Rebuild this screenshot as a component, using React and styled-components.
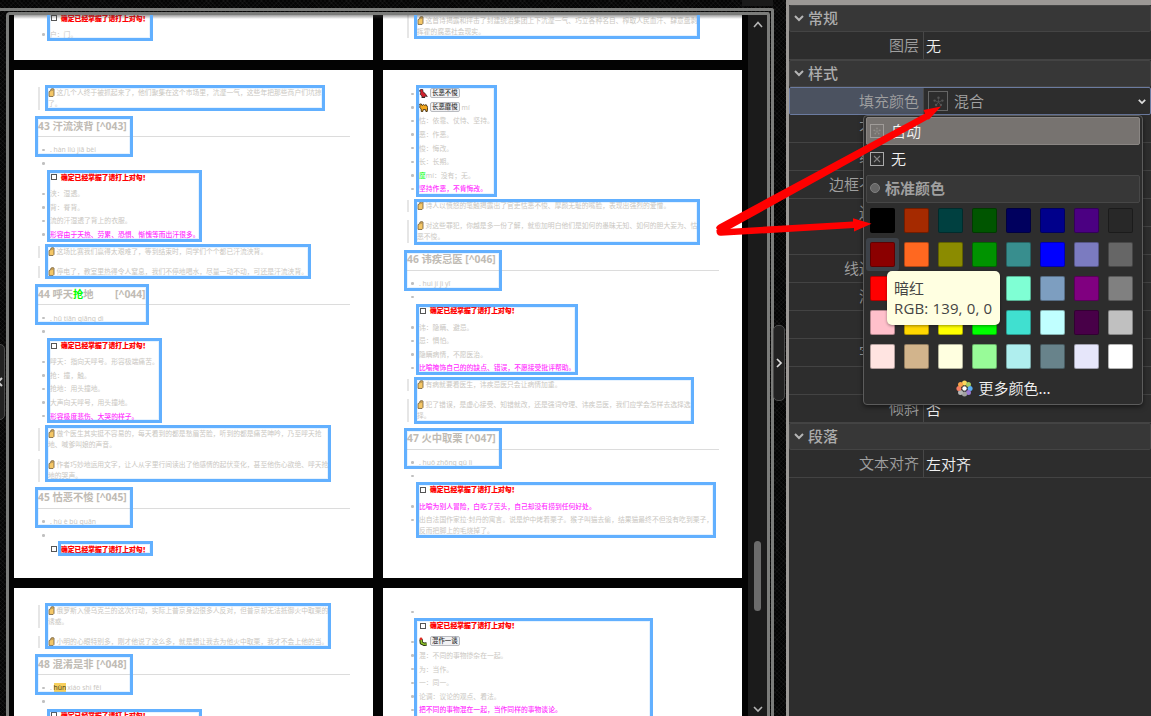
import React from "react";
import styled, { createGlobalStyle, css } from "styled-components";

const Global = createGlobalStyle`
  * { box-sizing: border-box; }
  html, body { margin: 0; background: #050505; overflow: hidden; }
  body { font-family: "Noto Sans", "Noto Sans CJK SC", sans-serif; }
`;

const weave = css`
  background-color: #050505;
  background-image:
    repeating-linear-gradient(45deg, rgba(255,255,255,0.035) 0 1px, transparent 1px 3px),
    repeating-linear-gradient(-45deg, rgba(255,255,255,0.03) 0 1px, transparent 1px 3px);
`;

const Shell = styled.div`
  position: relative;
  display: flex;
  width: 1151px;
  height: 716px;
  overflow: hidden;
  ${weave}
`;

/* ---------- document area ---------- */

const Workspace = styled.div`
  width: 774px;
  height: 716px;
  padding-top: 8px;
  flex: none;
`;

const OuterFrame = styled.div`
  height: 708px;
  border-top: 3px solid #7b7c7a;
  border-right: 3px solid #7b7c7a;
  border-top-right-radius: 3px;
  padding: 1px 1px 0 6px;
`;

const InnerFrame = styled.div`
  display: flex;
  height: 704px;
  border: 3px solid #7b7c7a;
  border-bottom: 0;
  border-radius: 4px 3px 0 0;
  background: #030303;
`;

const Pages = styled.div`
  position: relative;
  display: grid;
  grid-template-columns: 359px 359px;
  grid-template-rows: 45px 508px 128px;
  gap: 10px;
  width: 739px;
  padding-left: 5px;
  height: 701px;
  overflow: hidden;
  &::after {
    content: "";
    position: absolute;
    inset: 0 6px auto 5px;
    height: 4px;
    background: linear-gradient(rgba(60,60,60,0.5), transparent);
  }
`;

const Page = styled.article`
  background: #fff;
  overflow: hidden;
  padding: ${(p) => p.$top}px 23px 0 24px;
  color: #cac7c2;
  font-size: 6.8px;
  line-height: 11px;
  white-space: nowrap;
`;

const Quote = styled.blockquote`
  margin: 0 0 8px;
  padding: 0 0 1px 8px;
  border-left: 2px solid #e6e6e6;
`;

const Heading = styled.h2`
  margin: -8px 0 6px;
  height: 27.2px;
  padding-top: 8.7px;
  border-bottom: 1px solid #dcdcdc;
  color: #bfbbb4;
  font-size: 10.3px;
  line-height: 14px;
  font-weight: 700;
  white-space: pre;
`;

const Items = styled.ul`
  margin: 0 0 4.7px;
  padding: 0;
  list-style: none;
`;

const Item = styled.li`
  display: flex;
  min-height: 13.6px;
  padding: 1.3px 0 0 12px;
  position: relative;
  color: ${(p) => (p.$hot ? "#ff30ff" : "inherit")};
  font-weight: ${(p) => (p.$hot ? 500 : 400)};
  &::before {
    content: "";
    position: absolute;
    left: 4px;
    top: 5.6px;
    width: 2.5px;
    height: 2.5px;
    border-radius: 50%;
    background: #c0c0c0;
  }
`;

const Check = styled.div`
  display: flex;
  align-items: center;
  gap: 4px;
  height: 16.6px;
  padding: 0 0 2.4px 13px;
  color: #ff0000;
  font-weight: 800;
  -webkit-text-stroke: 0.15px #ff0000;
`;

const Box = styled.i`
  width: 6px;
  height: 6px;
  border: 1px solid #555;
`;

const Mark = styled.span`
  color: #0f0;
`;

const Amber = styled.span`
  background: #f8d05c;
  color: #4a4020;
  height: 10px;
  line-height: 10px;
  margin: 0 1px 0 0;
`;

const Tag = styled.span`
  display: inline-block;
  height: 10px;
  margin: 0 2px 0 2px;
  padding: 0 1px;
  border: 1px solid #b9bbc0;
  border-radius: 2px;
  background: #f1f1f3;
  color: #333;
  font-size: 6.4px;
  line-height: 8px;
  font-weight: 500;
`;

const TagLine = styled.span`
  display: flex;
  align-items: center;
`;

const HandSvg = styled.svg`
  width: 7px;
  height: 9px;
  margin: 0 1.5px 0 0;
  vertical-align: -2px;
`;

const Hand = () => (
  <HandSvg viewBox="0 0 7 9">
    <path d="M1 8.4V3.6L2.6 2.8 3.1 1 4.4.5 6 1v6.4L5 8.5Z" fill="#f5c766" stroke="#6e5a3c" strokeWidth=".8" />
    <path d="M3.2 3.2V1.2M4.6 3V1" stroke="#8a6f40" strokeWidth=".5" />
  </HandSvg>
);

const AnimalSvg = styled.svg`
  width: 9px;
  height: 9px;
  flex: none;
`;

const Parrot = () => (
  <AnimalSvg viewBox="0 0 9 9">
    <path d="M.5 1.5 2 .3 3.8.6 4 3l2 1.3L8.3 7.5 6 7l-.3 1.6H2.8L3 7 1.2 5.4 1.8 3Z" fill="#d2202c" stroke="#2a1717" strokeWidth=".7" />
    <path d="M.4 2.4 1.4 1.7M3 8.4h3" stroke="#222" strokeWidth=".9" />
  </AnimalSvg>
);
const Camel = () => (
  <AnimalSvg viewBox="0 0 9 9">
    <path d="M.3 1.4 2.2.9l.9 1.7L4.4 1.5l1.2.8L7.2 1.7l1.5 2.6L8.2 8.5H6.9L6.6 6.6H4.2L3.8 8.5H2.3L2.1 5.8.7 4.6 1 2.6Z" fill="#f3a71c" stroke="#3d2a0c" strokeWidth=".9" />
  </AnimalSvg>
);
const Worm = () => (
  <AnimalSvg viewBox="0 0 9 9">
    <path d="M2 2.2 2.4 6 5 7.3 7.6 7" fill="none" stroke="#26320e" strokeWidth="3.4" strokeLinejoin="round" />
    <path d="M2.2 3 2.5 5.9 5 7.2 7.6 7" fill="none" stroke="#8fc42c" strokeWidth="1.6" />
    <circle cx="2" cy="1.8" r="1.4" fill="#e02a24" />
  </AnimalSvg>
);

const Todo = () => (
  <Check>
    <Box />
    <span>确定已经掌握了请打上对勾！</span>
  </Check>
);

const Said = ({ lines }) => (
  <Quote>
    {lines.map((text, i) => (
      <div key={text}>
        {i === 0 && <Hand />}
        {text}
      </div>
    ))}
  </Quote>
);

const List = ({ rows, hot }) => (
  <Items>
    {rows.map((row, i) => (
      <Item key={i} $hot={i === hot}>
        <span>{row}</span>
      </Item>
    ))}
  </Items>
);

const Entry = ({ title, pinyin, rows, hot }) => (
  <>
    <Heading>{title}</Heading>
    <Item>
      <span>. {pinyin}</span>
    </Item>
    <Item />
    <Todo />
    {rows && <List rows={rows} hot={hot} />}
  </>
);

const PartialTop = styled.div`
  margin-top: -4px;
`;

const Scroll = styled.div`
  display: flex;
  flex-direction: column;
  align-items: center;
  width: 19px;
  background: #1b1b1b;
`;
const Thumb = styled.div`
  width: 7px;
  height: 70px;
  margin: 510px 0 94px;
  border-radius: 4px;
  background: #6c6c6c;
`;
const Chevron = styled.svg`
  display: block;
  flex: none;
  fill: none;
  stroke: ${(p) => p.$color || "#b5b5b5"};
  stroke-width: ${(p) => p.$weight || 1.6};
`;
const ScrollTop = styled.div`
  height: 16px;
  padding-top: 6px;
`;

/* ---------- selection frames over the pages ---------- */

const Overlay = styled.div`
  position: absolute;
  inset: 0;
  clip-path: inset(15px 384px 0 9px);
`;
const Selection = styled.div`
  position: absolute;
  left: ${(p) => p.$r[0]}px;
  top: ${(p) => p.$r[1]}px;
  width: ${(p) => p.$r[2] - p.$r[0]}px;
  height: ${(p) => p.$r[3] - p.$r[1]}px;
  border: 3px solid #62b0ff;
  box-shadow: inset 0 0 0 1px rgba(92,174,255,0.15);
`;
const frames = [
  [47, 0, 153, 41], [45, 85, 325, 111], [35, 116, 133, 157], [47, 170, 202, 242],
  [45, 244, 311, 279], [35, 284, 149, 325], [47, 338, 162, 423], [45, 425, 331, 482],
  [35, 487, 133, 528], [58, 541, 153, 556], [45, 603, 331, 649], [35, 654, 133, 695],
  [47, 709, 202, 740], [414, 0, 700, 39], [416, 85, 497, 197], [414, 199, 700, 245],
  [404, 250, 502, 291], [416, 304, 578, 375], [414, 377, 694, 424], [404, 428, 502, 469],
  [416, 482, 716, 538], [414, 618, 653, 740],
];

const Handle = styled.div`
  position: absolute;
  display: flex;
  align-items: center;
  justify-content: center;
  left: ${(p) => p.$x}px;
  top: ${(p) => p.$y}px;
  width: 12px;
  height: 76px;
  border: 1px solid #4c4c4c;
  border-radius: 5px;
  background: #222;
`;
const TopTab = styled.div`
  position: absolute;
  left: 742px;
  top: 0;
  width: 31px;
  height: 6px;
  background: #1a1a1a;
`;

/* ---------- inspector ---------- */

const Inspector = styled.aside`
  width: 365px;
  height: 716px;
  margin-left: 12px;
  border-left: 3px solid #9b9895;
  border-top: 5px solid #9b9895;
  background: #2d2d2d;
  color: #a0a0a0;
  font-family: "Noto Sans CJK SC", sans-serif;
  font-weight: 350;
  font-size: 15px;
  line-height: 20px;
`;
const Section = styled.div`
  display: flex;
  align-items: center;
  gap: 4px;
  height: 27px;
  padding: 0 0 2px 4px;
  border: 1px solid #444;
  border-radius: 2px;
  background: #373737;
  color: #acacac;
  font-weight: 500;
`;
const Row = styled.div`
  display: grid;
  grid-template-columns: 135px 1fr;
  height: 28px;
  border-bottom: 1px solid #434343;
  ${(p) => p.$active && css`
    border: 1px solid #6b7ba0;
    border-radius: 2px;
    grid-template-columns: 134px 1fr;
  `}
`;
const Label = styled.div`
  border-right: 1px solid #484848;
  padding: 3px ${(p) => 4 + (p.$covered || 0) * 15}px 0 0;
  text-align: right;
  background: ${(p) => (p.$active ? "#4b5260" : "transparent")};
`;
const Value = styled.div`
  display: flex;
  align-items: center;
  padding: 0 4px 0 ${(p) => (p.$active ? 4 : 2)}px;
  color: ${(p) => (p.$active ? "#a3a3a3" : "#f0f0f0")};
`;
const Grow = styled.span`
  flex: 1;
  padding-left: 6px;
`;
const IconBox = styled.span`
  display: flex;
  align-items: center;
  justify-content: center;
  flex: none;
  width: ${(p) => p.$s}px;
  height: ${(p) => p.$s}px;
  border: 1px solid ${(p) => p.$c};
`;

const Star = ({ size, color }) => (
  <svg width={size} height={size} viewBox="0 0 10 10" fill={color}>
    <circle cx="5" cy="1.6" r="1.1" />
    <circle cx="8.5" cy="4.2" r="1.1" />
    <circle cx="7.2" cy="8.2" r="1.1" />
    <circle cx="2.8" cy="8.2" r="1.1" />
    <circle cx="1.5" cy="4.2" r="1.1" />
    <path d="M5 5.5V3M5 5.500 7.400 4.700M5 5.500 6.500 7.500M5 5.500 3.500 7.500M5 5.500 2.600 4.700" stroke={color} strokeWidth=".7" />
  </svg>
);

const Menu = styled.div`
  position: absolute;
  left: 863px;
  top: 115px;
  width: 280px;
  height: 290px;
  padding: 1px 2px;
  border: 1px solid #5c5c5c;
  border-radius: 4px;
  background: #2d2d2d;
  box-shadow: 0 2px 5px rgba(0,0,0,0.5);
  color: #f2f2f2;
  font-family: "Noto Sans CJK SC", sans-serif;
  font-weight: 350;
  font-size: 15px;
  line-height: 20px;
`;
const MenuItem = styled.div`
  display: flex;
  align-items: center;
  gap: 7px;
  height: 28px;
  padding-left: ${(p) => (p.$on ? 3 : 4)}px;
  border-radius: 2px;
  ${(p) => p.$on && "background: #777370; border: 1px solid #8a8683;"}
`;
const MenuHead = styled.div`
  display: flex;
  align-items: center;
  gap: 5px;
  height: 28px;
  margin-top: 2px;
  padding: 0 0 2px 3px;
  border: 1px solid #474747;
  border-radius: 2px;
  background: #373737;
  color: #a0a0a0;
  font-weight: 600;
`;
const Dot = styled.i`
  width: 10px;
  height: 10px;
  border-radius: 50%;
  background: #666;
  border: 1px solid #808080;
`;
const Palette = styled.div`
  display: grid;
  grid-template-columns: repeat(8, 34px);
  grid-auto-rows: 34px;
  margin-top: 1px;
`;
const Cell = styled.div`
  display: flex;
  align-items: center;
  justify-content: center;
  width: 33px;
  height: 33px;
  border-radius: 3px;
  background: ${(p) => (p.$on ? "#3d4249" : "transparent")};
`;
const Swatch = styled.div`
  width: 25px;
  height: 25px;
  border-radius: 2px;
  border: 1px solid rgba(0,0,0,0.3);
  background: ${(p) => p.$c};
`;
const More = styled.div`
  display: flex;
  align-items: center;
  justify-content: center;
  gap: 5px;
  height: 28px;
  padding-left: 1px;
`;
const Tooltip = styled.div`
  position: absolute;
  left: 887px;
  top: 271px;
  width: 113px;
  height: 54px;
  padding: 7px 7px;
  border-radius: 5px;
  background: #ffffe1;
  color: #444;
  font: 400 15px/20px "Noto Sans CJK SC", sans-serif;
  white-space: nowrap;
  box-shadow: 0 1px 3px rgba(0,0,0,0.4);
`;
const Latin = styled.div`
  font-family: "Open Sans", "Noto Sans", sans-serif;
  letter-spacing: 0.15px;
`;
const Arrows = styled.svg`
  position: absolute;
  left: 0;
  top: 0;
`;

const colors = [
  "#000000", "#a52a00", "#004040", "#005500", "#00005e", "#00008b", "#4b0082", "#282828",
  "#8b0000", "#ff6820", "#8b8b00", "#009300", "#388e8e", "#0000ff", "#7b7bc0", "#666666",
  "#ff0000", "#ffad5b", "#ffd700", "#00c800", "#7fffd4", "#7d9ec0", "#800080", "#808080",
  "#ffc0cb", "#ffd700", "#ffff00", "#00ff00", "#40e0d0", "#c0ffff", "#480048", "#c0c0c0",
  "#ffe4e1", "#d2b48c", "#ffffe0", "#98fb98", "#afeeee", "#68838b", "#e6e6fa", "#ffffff",
];
const petals = ["#f9d65c", "#a5ca62", "#59aef2", "#9b7bd4", "#a0a0a0", "#b5b5b5", "#f37d62", "#f9a24b"];

const Down = ({ color, weight }) => (
  <Chevron width="10" height="8" viewBox="0 0 10 8" $color={color} $weight={weight}>
    <path d="M1 2 5 6 9 2" />
  </Chevron>
);

// Start of each label that the open menu runs over, with the number of characters under the menu.
const coveredRows = [
  ["不", 3], ["线", 3], ["边框不", 3], ["边", 3], ["", 0],
  ["线边", 3], ["渐", 3], ["", 0], ["字", 3], ["", 0],
];

export default function App() {
  return (
    <Shell>
      <Global />
      <Workspace>
        <OuterFrame>
          <InnerFrame>
            <Pages>
              <Page $top={0}>
                <PartialTop>
                  <Todo />
                  <List rows={["户：门。"]} />
                </PartialTop>
              </Page>
              <Page $top={0}>
                <Said lines={["这首诗揭露和抨击了封建统治集团上下沆瀣一气、巧立各种名目、榨取人民血汗、肆意盘剥", "挥霍的腐恶社会现实。"]} />
              </Page>
              <Page $top={17}>
                <Said lines={["这几个人终于被抓起来了，他们聚集在这个市场里，沆瀣一气，这些年把那些商户们坑掠", "了。"]} />
                <Entry title="43 汗流浃背 [^043]" pinyin="hàn liú jiā bèi" hot={3}
                  rows={["浃：湿透。", "背：脊背。", "流的汗湿透了背上的衣服。", "形容由于天热、劳累、恐惧、惭愧等而出汗很多。"]} />
                <Said lines={["这场比赛我们赢得太艰难了，等到结束时，同学们个个都已汗流浃背。"]} />
                <Said lines={["停电了，教室里热得令人窒息，我们不停地喝水，尽量一动不动，可还是汗流浃背。"]} />
                <Entry title={<>44 呼天<Mark>抢</Mark>地{"       "}{" "}[^044]</>} pinyin="hū tiān qiāng dì" hot={4}
                  rows={["呼天：指向天呼号。形容极端痛苦。", "抢：撞，触。", "抢地：用头撞地。", "大声向天呼号，用头撞地。", "形容极度悲伤、大哭的样子。"]} />
                <Said lines={["做个医生其实挺不容易的，每天看到的都是愁眉苦脸，听到的都是痛苦呻吟，乃至呼天抢", "地、喊爹叫娘的声音。"]} />
                <Said lines={["作者巧妙地运用文字，让人从字里行间读出了他感情的起伏变化，甚至他伤心欲绝、呼天抢", "地的哭声。"]} />
                <Entry title="45 怙恶不悛 [^045]" pinyin="hù è bù quān" />
              </Page>
              <Page $top={17}>
                <List hot={7} rows={[
                  <TagLine key="a"><Parrot /><Tag>长恶不悛</Tag></TagLine>,
                  <TagLine key="b"><Camel /><Tag>长恶靡悛</Tag>mí</TagLine>,
                  "怙：依靠、仗恃、坚持。", "恶：作恶。", "悛：悔改。", "长：长期。",
                  <React.Fragment key="c"><Mark>靡</Mark>mí：没有；无。</React.Fragment>,
                  "坚持作恶，不肯悔改。",
                ]} />
                <Said lines={["诗人以愤怒的笔触揭露出了官吏怙恶不悛、厚颜无耻的嘴脸，表现出强烈的爱憎。"]} />
                <Said lines={["对这些罪犯，你越是多一份了解，就愈加明白他们是如何的愚昧无知、如何的胆大妄为、怙", "恶不悛。"]} />
                <Entry title="46 讳疾忌医 [^046]" pinyin="huì jí jì yī" hot={3}
                  rows={["讳：隐瞒、避忌。", "忌：惧怕。", "隐瞒病情，不愿医治。", "比喻掩饰自己的的缺点、错误，不愿接受批评帮助。"]} />
                <Said lines={["有病就要看医生，讳疾忌医只会让病情加重。"]} />
                <Said lines={["犯了错误，是虚心接受、知错就改，还是强词夺理、讳疾忌医，我们应学会怎样去选择选", "择。"]} />
                <Entry title="47 火中取栗 [^047]" pinyin="huǒ zhōng qǔ lì" hot={0}
                  rows={["比喻为别人冒险，白吃了苦头，自己却没有捞到任何好处。", <React.Fragment key="d">出自法国作家拉·封丹的寓言。说是炉中烤着栗子。猴子叫猫去偷，结果猫最终不但没有吃到栗子，<br />反而把脚上的毛烧掉了。</React.Fragment>]} />
              </Page>
              <Page $top={17}>
                <Said lines={["俄罗斯入侵乌克兰的这次行动，实际上普京身边很多人反对，但普京却无法抵御火中取栗的", "诱惑。"]} />
                <Said lines={["小明的心眼特别多，刚才他说了这么多，就是想让我去为他火中取栗，我才不会上他的当。"]} />
                <Entry title="48 混淆是非 [^048]" pinyin={<><Amber>hùn</Amber>xiáo shì fēi</>} />
              </Page>
              <Page $top={17}>
                <Item />
                <Todo />
                <List hot={5} rows={[
                  <TagLine key="e"><Worm /><Tag>混作一谈</Tag></TagLine>,
                  "混：不同的事物掺杂在一起。", "为：当作。", "一：同一。", "论调：议论的观点、看法。", "把不同的事物混在一起，当作同样的事物谈论。",
                ]} />
              </Page>
            </Pages>
            <Scroll>
              <ScrollTop>
                <Chevron width="10" height="7" viewBox="0 0 10 7"><path d="M1 6 5 1.5 9 6" /></Chevron>
              </ScrollTop>
              <Thumb />
              <Down />
            </Scroll>
          </InnerFrame>
        </OuterFrame>
      </Workspace>

      <Inspector>
        <Section><Down weight={2} />常规</Section>
        <Row><Label>图层</Label><Value>无</Value></Row>
        <Section><Down weight={2} />样式</Section>
        <Row $active>
          <Label $active>填充颜色</Label>
          <Value $active>
            <IconBox $s={20} $c="#666"><Star size={11} color="#555" /></IconBox>
            <Grow>混合</Grow>
            <Chevron width="8" height="7" viewBox="0 0 10 8" $color="#ddd" $weight={2.2}><path d="M1 2 5 6 9 2" /></Chevron>
          </Value>
        </Row>
        {coveredRows.map(([text, n], i) => <Row key={i}><Label $covered={n}>{text}</Label><Value /></Row>)}
        <Row><Label>倾斜</Label><Value>否</Value></Row>
        <Section><Down weight={2} />段落</Section>
        <Row><Label>文本对齐</Label><Value>左对齐</Value></Row>
      </Inspector>

      <Overlay>
        {frames.map((r) => <Selection key={r.join()} $r={r} />)}
      </Overlay>
      <TopTab />
      <Handle $x={-7} $y={344}>
        <Chevron width="7" height="10" viewBox="0 0 7 10" $color="#ccc" $weight={2}><path d="M6 1 2 5 6 9" /></Chevron>
      </Handle>
      <Handle $x={773} $y={325}>
        <Chevron width="7" height="10" viewBox="0 0 7 10" $color="#ddd" $weight={1.7}><path d="M1 1 5 5 1 9" /></Chevron>
      </Handle>

      <Menu>
        <MenuItem $on><IconBox $s={14} $c="#a09c99"><Star size={8} color="#918d8a" /></IconBox>自动</MenuItem>
        <MenuItem>
          <IconBox $s={14} $c="#aaa">
            <svg width="8" height="8" viewBox="0 0 8 8"><path d="m1 1 6 6M7 1 1 7" stroke="#858585" strokeWidth="1.1" /></svg>
          </IconBox>
          无
        </MenuItem>
        <MenuHead><Dot />标准颜色</MenuHead>
        <Palette>
          {colors.map((c, i) => <Cell key={i} $on={i === 8}><Swatch $c={c} /></Cell>)}
        </Palette>
        <More>
          <svg width="17" height="17" viewBox="0 0 17 17">
            {petals.map((c, i) => (
              <circle key={c} cx={8.5 + 5.6 * Math.sin((i * Math.PI) / 4)} cy={8.5 - 5.6 * Math.cos((i * Math.PI) / 4)} r="2.5" fill={c} />
            ))}
            <circle cx="8.5" cy="8.5" r="2.2" fill="#fff" />
          </svg>
          更多颜色...
        </More>
      </Menu>

      <Arrows width="1151" height="716" fill="#ff0000">
        <path d="M716 228 Q716.500 225.500 719 224.500L925 113.500 923.500 110 941 106.500 928.500 120 928.500 119 721 234Z" />
        <path d="M717 229.500 853 221.500V218.200L871.500 223.800 854 231.500V228L721 235.800Q716 236 716.500 230Z" />
      </Arrows>
      <Tooltip>
        暗红
        <Latin>RGB: 139, 0, 0</Latin>
      </Tooltip>
    </Shell>
  );
}
